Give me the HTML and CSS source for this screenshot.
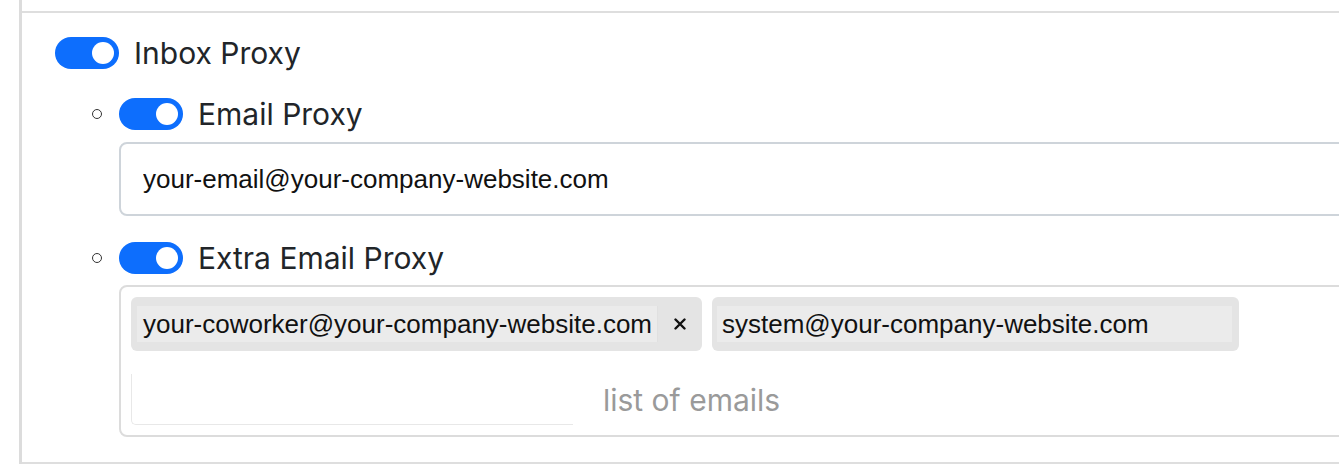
FILE: index.html
```html
<!DOCTYPE html>
<html lang="en">
<head>
    <meta charset="UTF-8">
    <meta name="viewport" content="width=device-width, initial-scale=1.0">
    <title>Inbox Proxy</title>
    <link rel="stylesheet" href="styles.css">
</head>
<body>
    <div class="page">
        <div class="card">
            <div class="section">
                <div class="switch-row">
                    <span class="switch"><span class="knob"></span></span>
                    <span class="switch-label">Inbox Proxy</span>
                </div>
                <ul class="sub-list">
                    <li class="sub-item">
                        <div class="switch-row">
                            <span class="bullet"></span>
                            <span class="switch"><span class="knob"></span></span>
                            <span class="switch-label">Email Proxy</span>
                        </div>
                        <div class="field">
                            <input class="text-input" type="text" value="your-email@your-company-website.com">
                        </div>
                    </li>
                    <li class="sub-item sub-item--second">
                        <div class="switch-row">
                            <span class="bullet"></span>
                            <span class="switch"><span class="knob"></span></span>
                            <span class="switch-label">Extra Email Proxy</span>
                        </div>
                        <div class="field">
                            <div class="tags-box">
                                <div class="tags">
                                    <span class="tag">
                                        <span class="tag-text">your-coworker@your-company-website.com</span>
                                        <span class="tag-remove">
                                            <svg width="12" height="12" viewBox="0 0 12 12"><path d="M1.5 1.5 L10.5 10.5 M10.5 1.5 L1.5 10.5" stroke="#111" stroke-width="2.4" stroke-linecap="round"/></svg>
                                        </span>
                                    </span>
                                    <span class="tag tag--wide">
                                        <span class="tag-text">system@your-company-website.com</span>
                                    </span>
                                </div>
                                <div class="tags-input-row">
                                    <span class="tags-input"></span>
                                    <span class="tags-placeholder">list of emails</span>
                                </div>
                            </div>
                        </div>
                    </li>
                </ul>
            </div>
        </div>
    </div>
</body>
</html>
```

FILE: styles.css
```css
* {
    margin: 0;
    padding: 0;
    box-sizing: border-box;
}
:root {
    --blue: #0d6efd;
    --text: #212529;
    --line: #dedede;
    --input-border: #ced4da;
    --tag-bg: #e4e4e4;
    --tag-inner: #ebebeb;
    --label-font: Inter, "Noto Sans", sans-serif;
    --field-font: "Liberation Sans", Arial, sans-serif;
}
html, body {
    background: #fff;
    overflow: hidden;
}
body {
    font-family: var(--label-font);
    color: var(--text);
    width: 1339px;
    height: 472px;
}
.page {
    padding-left: 19px;
    padding-top: 11px;
}
.card {
    border-left: 3px solid #dcdcdc;
    margin-top: -11px;
    padding-top: 11px;
}
.section {
    border-top: 2px solid var(--line);
    border-bottom: 2px solid var(--line);
    padding: 24px 0 25px 33px;
}
.switch-row {
    display: flex;
    align-items: center;
    height: 32px;
}
.switch {
    width: 64px;
    height: 32px;
    border-radius: 16px;
    background: var(--blue);
    display: flex;
    align-items: center;
    justify-content: flex-end;
    padding-right: 5px;
    flex-shrink: 0;
}
.knob {
    width: 22px;
    height: 22px;
    border-radius: 50%;
    background: #fff;
}
.switch-label {
    font-size: 30px;
    margin-left: 15px;
}
.sub-list {
    list-style: none;
    margin-left: 37px;
    margin-top: 29px;
}
.sub-item--second {
    margin-top: 26px;
}
.bullet {
    width: 10px;
    height: 10px;
    border: 1.5px solid #333;
    border-radius: 50%;
    margin-right: 17px;
    flex-shrink: 0;
}
.field {
    margin-left: 27px;
}
.sub-item .field {
    margin-top: 12px;
}
.sub-item--second .field {
    margin-top: 11px;
}
.text-input {
    display: block;
    width: 1300px;
    height: 74px;
    border: 2px solid var(--input-border);
    border-radius: 8px;
    padding-left: 22px;
    font-family: var(--field-font);
    font-size: 26px;
    color: #111;
    outline: none;
    background: #fff;
}
.tags-box {
    width: 1300px;
    border: 2px solid #dcdcdc;
    border-radius: 8px;
    padding: 10px;
}
.tags {
    display: flex;
    gap: 10px;
}
.tag {
    display: flex;
    align-items: center;
    height: 54px;
    background: var(--tag-bg);
    border-radius: 6px;
    padding-left: 6px;
    font-family: var(--field-font);
    font-size: 26px;
    color: #111;
}
.tag-text {
    background: var(--tag-inner);
    height: 36px;
    line-height: 36px;
    padding: 0 5px 0 6px;
    border-right: 1px solid #e0e0e0;
}
.tag-remove {
    width: 44px;
    display: flex;
    justify-content: center;
    align-items: center;
}
.tag--wide {
    width: 527px;
    padding-left: 5px;
    padding-right: 7px;
}
.tag--wide .tag-text {
    flex: 1;
    padding-left: 5px;
    border-right: none;
}
.tags-input-row {
    display: flex;
    align-items: center;
    margin-top: 23px;
    height: 51px;
}
.tags-input {
    width: 442px;
    height: 51px;
    border-left: 1px solid #e8e8e8;
    border-bottom: 1px solid #e8e8e8;
    border-bottom-left-radius: 5px;
}
.tags-placeholder {
    margin-left: 30px;
    font-size: 30px;
    color: #9a9a9a;
}
```
